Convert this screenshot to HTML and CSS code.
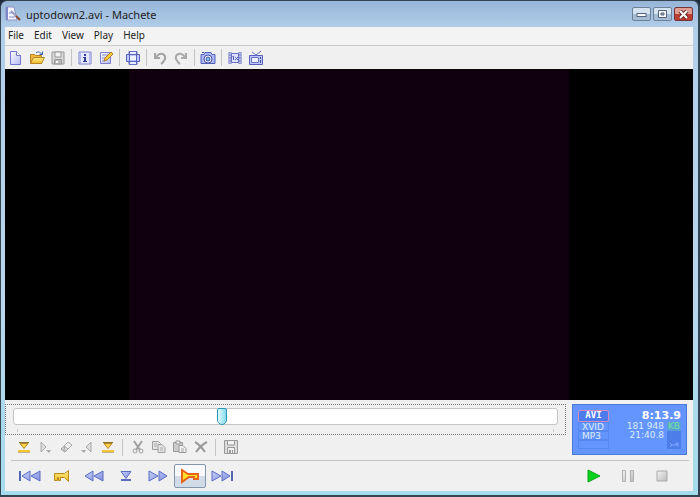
FILE: index.html
```html
<!DOCTYPE html>
<html lang="en">
<head>
  <meta charset="UTF-8">
  <title>uptodown2.avi - Machete</title>
  <link rel="stylesheet" href="styles.css">
</head>
<body>
  <!-- shared gradients -->
  <svg class="defs" aria-hidden="true">
    <defs>
      <linearGradient id="paper" x1="0" y1="0" x2="1" y2="1"><stop offset="0" stop-color="#fff"/><stop offset="1" stop-color="#b4baf2"/></linearGradient>
      <linearGradient id="blue" x1="0" y1="0" x2="1" y2="1"><stop offset="0" stop-color="#c3cdf8"/><stop offset="1" stop-color="#8492e2"/></linearGradient>
      <linearGradient id="gold" x1="0" y1="0" x2="0" y2="1"><stop offset="0" stop-color="#fff08a"/><stop offset="1" stop-color="#eeb820"/></linearGradient>
      <linearGradient id="grey" x1="0" y1="0" x2="1" y2="1"><stop offset="0" stop-color="#f2f2f2"/><stop offset="1" stop-color="#bcbcbc"/></linearGradient>
    </defs>
  </svg>

  <div class="window">
    <header class="titlebar">
      <svg class="app-icon" width="16" height="16" viewBox="0 0 16 16">
        <path d="M1 1h8l3 13H1z" fill="#f4f5fe" stroke="#8a92c4"/>
        <path d="M1 1h2v13H1z" fill="#8088cc"/>
        <path d="M4 7h5M4 11h6" stroke="#8088cc" fill="none"/>
        <path d="M6 5l6 6" stroke="#9aa0c0" stroke-width="2"/>
        <path d="M11 10l4 4" stroke="#8d4b32" stroke-width="2"/>
      </svg>
      <h1>uptodown2.avi - Machete</h1>
      <div class="window-buttons">
        <button aria-label="Minimize"><svg width="11" height="9" viewBox="0 0 11 9"><rect x="1" y="3.500" width="9" height="3" fill="#fff" stroke="#53657d"/></svg></button>
        <button aria-label="Maximize"><svg width="11" height="9" viewBox="0 0 11 9"><path d="M1.500.5h8v7h-8z" fill="#fff" stroke="#53657d"/><path d="M4 3h3v2H4z" fill="#9eb5cf" stroke="#53657d"/></svg></button>
        <button class="close" aria-label="Close"><svg width="11" height="9" viewBox="0 0 11 9"><path d="M2 1l7 7M9 1L2 8" stroke="#6b2a2a" stroke-width="4"/><path d="M2 1l7 7M9 1L2 8" stroke="#fff" stroke-width="2"/></svg></button>
      </div>
    </header>

    <nav class="menu">
      <button>File</button>
      <button>Edit</button>
      <button>View</button>
      <button>Play</button>
      <button>Help</button>
    </nav>

    <div class="toolbar">
      <button aria-label="New"><svg width="16" height="16" viewBox="0 0 16 16"><path d="M2.500 1.500h6l4 4v9h-10z" fill="url(#paper)" stroke="#7478cc"/><path d="M8.500 1.500v4h4" fill="#fff" stroke="#7478cc"/></svg></button>
      <button aria-label="Open"><svg width="16" height="16" viewBox="0 0 16 16"><path d="M1.500 13.500v-9h4l1 1h6v8z" fill="#efb73c" stroke="#b98428"/><path d="M1.500 13.500l3-6h11l-3 6z" fill="url(#gold)" stroke="#b98428"/><path d="M7 3c2-2 5-1 6 2M10.500 4.500h3v-3" fill="none" stroke="#355fb0"/></svg></button>
      <button aria-label="Save" disabled><svg width="16" height="16" viewBox="0 0 16 16"><path d="M2 2h12v12H2z" fill="#d8d8d8" stroke="#999"/><path d="M5 2h6v5H5z" fill="#f2f2f2" stroke="#999"/><path d="M4.500 9.500h7V14h-7z" fill="#b9b9b9" stroke="#999"/><path d="M6 11h2v2H6z" fill="#fff"/></svg></button>
      <span class="sep"></span>
      <button aria-label="File information"><svg width="16" height="16" viewBox="0 0 16 16"><path d="M2 2h12v12H2z" fill="#e6e9ff" stroke="#7c82cc"/><path d="M3.500 3v10M12.500 3v10" stroke="#b3bbf1"/><path d="M7 4h2v2H7zM6 7h3v4h1v1H6v-1h1V8H6z" fill="#303ca0"/></svg></button>
      <button aria-label="Edit tags"><svg width="16" height="16" viewBox="0 0 16 16"><path d="M2.500 2.500h10v11h-10z" fill="url(#paper)" stroke="#7a80cc"/><path d="M4 5h6M4 8h4M4 11h3" stroke="#8a92d4"/><path d="M6 11l1-3 6-6 2 2-6 6z" fill="#ffcf35" stroke="#b87823"/></svg></button>
      <span class="sep"></span>
      <button aria-label="Video frame"><svg width="16" height="16" viewBox="0 0 16 16"><path d="M4 1.500h8v13H4z" fill="#e8ecff" stroke="#6871c8"/><path d="M1.500 4.500h13v7h-13z" fill="#bcc6ff" stroke="#5962bd"/><path d="M4.500 2v12M11.500 2v12" stroke="#5962bd"/><path d="M5 6h6v4H5z" fill="#eef1ff"/></svg></button>
      <span class="sep"></span>
      <button aria-label="Undo" disabled><svg width="16" height="16" viewBox="0 0 16 16"><path d="M3 3v5h5M3 8l3-3c4-3 8 0 7 4-1 2-2 4-4 5" fill="none" stroke="#a4a4a4" stroke-width="2"/></svg></button>
      <button aria-label="Redo" disabled><svg width="16" height="16" viewBox="0 0 16 16"><path d="M13 3v5H8M13 8l-3-3C6 2 2 5 3 9c1 2 2 4 4 5" fill="none" stroke="#aaa" stroke-width="2"/></svg></button>
      <span class="sep"></span>
      <button aria-label="Capture frame"><svg width="16" height="16" viewBox="0 0 16 16"><path d="M1 4.500h3l1-2h6l1 2h3v9H1z" fill="#aeb8f5" stroke="#5560b8"/><circle cx="8" cy="9" r="4" fill="#fff" stroke="#4350b1"/><circle cx="8" cy="9" r="2" fill="#7fc0f4" stroke="#4350b1"/><path d="M2 2.500h2" stroke="#4350b1"/></svg></button>
      <span class="sep"></span>
      <button aria-label="Original size"><svg width="16" height="16" viewBox="0 0 16 16"><path d="M3 2v12M13 2v12" stroke="#6e75c8" stroke-width="3"/><path d="M3 2.500v11M13 2.500v11" stroke="#fff" stroke-dasharray="2 1"/><path d="M4.500 3.500h7v9h-7z" fill="#dbe1ff" stroke="#6870c4"/><path d="M5.500 7l1-1v4M8 7l3 3M11 7l-3 3" fill="none" stroke="#5660b9"/></svg></button>
      <button aria-label="Full screen"><svg width="16" height="16" viewBox="0 0 16 16"><path d="M4 2l4 3 5-4" fill="none" stroke="#6871c2"/><path d="M1.500 5.500h13v9h-13z" fill="#bec6fb" stroke="#5861b9"/><path d="M3.500 7.500h7v5h-7z" fill="#eef2ff" stroke="#6972c7"/><path d="M12.500 7v2M12.500 10v3" stroke="#414ba8"/></svg></button>
    </div>

    <main class="video"><div class="frame"></div></main>

    <footer class="controls">
      <div class="upper">
        <div class="editing">
          <div class="seek">
            <input type="range" min="0" max="1300" value="494" aria-label="Position">
            <div class="ticks"></div>
          </div>
          <div class="toolbar edit-bar">
            <button aria-label="Selection start"><svg width="14" height="14" viewBox="0 0 14 14"><path d="M2 2.500h10M1 12h12" stroke="#91702a"/><path d="M3 3.500h8l-4 5z" fill="#ffd34a" stroke="#b88625"/><path d="M1 11h12" stroke="#f3c530" stroke-width="2"/></svg></button>
            <button aria-label="Go to selection start" disabled><svg width="14" height="14" viewBox="0 0 14 14"><path d="M3 2l5 5-5 5z" fill="#ddd" stroke="#aaa"/><path d="M8 10h5l-2 3z" fill="#aaa"/></svg></button>
            <button aria-label="Clear selection" disabled><svg width="14" height="14" viewBox="0 0 14 14"><path d="M2 9l7-7 4 3-7 7z" fill="#eee" stroke="#a5a5a5"/><path d="M5 6l4 3M2 9l4 3v-3L5 6z" fill="#ccc" stroke="#a5a5a5"/></svg></button>
            <button aria-label="Go to selection end" disabled><svg width="14" height="14" viewBox="0 0 14 14"><path d="M11 2L6 7l5 5z" fill="#ddd" stroke="#aaa"/><path d="M1 10h5l-2 3z" fill="#aaa"/></svg></button>
            <button aria-label="Selection end"><svg width="14" height="14" viewBox="0 0 14 14"><path d="M2 2.500h10M1 12h12" stroke="#91702a"/><path d="M3 3.500h8l-4 5z" fill="#ffd34a" stroke="#b88625"/><path d="M1 11h12" stroke="#f3c530" stroke-width="2"/></svg></button>
            <span class="sep"></span>
            <button aria-label="Cut" disabled><svg width="14" height="14" viewBox="0 0 14 14"><path d="M3 1l6 9M11 1L5 10" stroke="#a0a0a0" stroke-width="2"/><circle cx="4" cy="11" r="2" fill="none" stroke="#a0a0a0"/><circle cx="10" cy="11" r="2" fill="none" stroke="#a0a0a0"/></svg></button>
            <button aria-label="Copy" disabled><svg width="14" height="14" viewBox="0 0 14 14"><path d="M.5 1.500h6l2 2v6h-8z" fill="#e4e4e4" stroke="#a0a0a0"/><path d="M6 4.500h4l3 3v5H6z" fill="#e4e4e4" stroke="#a0a0a0"/><path d="M2 4h3M2 6h3M8 8h3M8 10h3" stroke="#aaa"/></svg></button>
            <button aria-label="Paste" disabled><svg width="14" height="14" viewBox="0 0 14 14"><path d="M.5 2.500h9v9h-9z" fill="#ccc" stroke="#999"/><path d="M3 1h4v3H3z" fill="#eee" stroke="#999"/><path d="M6 5.500h4l3 3v4H6z" fill="#eee" stroke="#999"/><path d="M8 9h3M8 11h3" stroke="#aaa"/></svg></button>
            <button aria-label="Delete" disabled><svg width="14" height="14" viewBox="0 0 14 14"><path d="M1 2c4 2 7 6 10 10M13 2C9 4 5 8 2 12" fill="none" stroke="#999" stroke-width="2"/></svg></button>
            <span class="sep"></span>
            <button aria-label="Save selection" disabled><svg width="14" height="14" viewBox="0 0 14 14"><path d="M.5.5h13v13H.5z" fill="#ddd" stroke="#999"/><path d="M3.500 1v4h7V1M3.500 13V7.500h7V13" fill="#f1f1f1" stroke="#999"/><path d="M5 10h2v3H5zM8 10h1v3H8z" fill="#999"/></svg></button>
          </div>
        </div>

        <section class="info">
          <div class="formats">
            <b>AVI</b>
            <span>XVID</span>
            <span>MP3</span>
            <span></span>
          </div>
          <div class="stats">
            <strong>8:13.9</strong>
            <span>181 948</span><em>KB</em>
            <span>21:40.8</span><i></i>
            <span></span><i><svg width="10" height="8" viewBox="0 0 10 8"><path d="M1 2l2 2-2 2M3 4h6v2M7 4V2h2v2" fill="none" stroke="#7ea6ff"/></svg></i>
          </div>
        </section>
      </div>

      <div class="playback">
        <button aria-label="Go to start"><svg width="24" height="14" viewBox="0 0 24 14"><path d="M2 2v10" stroke="#5366b4" stroke-width="2"/><path d="M4 7l8-5v10zM13 7l9-5v10z" fill="url(#blue)" stroke="#5c6dc0"/></svg></button>
        <button aria-label="Previous key frame"><svg width="18" height="14" viewBox="0 0 18 14"><path d="M15.500 1.500v11l-4-4h-4v3h-2v-3h-1v3h-3v-7h10z" fill="url(#gold)" stroke="#b88c1c"/></svg></button>
        <button aria-label="Step back"><svg width="22" height="14" viewBox="0 0 22 14"><path d="M2 7l8-5v10zM11 7l9-5v10z" fill="url(#blue)" stroke="#5c6dc0"/></svg></button>
        <button aria-label="Go to position"><svg width="14" height="14" viewBox="0 0 14 14"><path d="M2 2.500h10l-5 7z" fill="url(#blue)" stroke="#5c6dc0"/><path d="M2 11h10" stroke="#5c6dc0" stroke-width="2"/></svg></button>
        <button aria-label="Step forward"><svg width="22" height="14" viewBox="0 0 22 14"><path d="M2 2l9 5-9 5zM12 2l8 5-8 5z" fill="url(#blue)" stroke="#5c6dc0"/></svg></button>
        <button class="active" aria-label="Next key frame"><svg width="20" height="16" viewBox="0 0 20 16"><path d="M2 2l6 4h10v5h-4V9H9l-7 5z" fill="#ffe428" stroke="#e8641c" stroke-width="2"/></svg></button>
        <button aria-label="Go to end"><svg width="24" height="14" viewBox="0 0 24 14"><path d="M2 2l9 5-9 5zM12 2l8 5-8 5z" fill="url(#blue)" stroke="#5c6dc0"/><path d="M22 2v10" stroke="#5366b4" stroke-width="2"/></svg></button>
        <div class="transport">
          <button aria-label="Play"><svg width="16" height="16" viewBox="0 0 16 16"><path d="M2 2l12 6-12 6z" fill="#08d21b" stroke="#08a516"/></svg></button>
          <button aria-label="Pause" disabled><svg width="16" height="16" viewBox="0 0 16 16"><path d="M2.500 2.500h3v11h-3zM10.500 2.500h3v11h-3z" fill="url(#grey)" stroke="#b0b0b0"/></svg></button>
          <button aria-label="Stop" disabled><svg width="16" height="16" viewBox="0 0 16 16"><path d="M3 3h10v10H3z" fill="url(#grey)" stroke="#a8a8a8"/></svg></button>
        </div>
      </div>
    </footer>
  </div>
</body>
</html>
```
FILE: styles.css
```css
* {
  box-sizing: border-box;
}

body {
  margin: 0;
  background: #1c2c38;
  font-family: "Noto Sans", sans-serif;
  font-size: 10px;
  color: #222;
}

button {
  padding: 0;
  border: 0;
  background: none;
  font: inherit;
  color: inherit;
}

svg {
  display: block;
}

.defs {
  position: absolute;
  width: 0;
  height: 0;
}

.window {
  display: flex;
  flex-direction: column;
  height: 100vh;
  padding: 0 5px 4px 4px;
  border: 1px solid #344450;
  border-width: 1px 2px 2px 1px;
  border-radius: 7px 7px 0 0;
  background: linear-gradient(#97b5d8, #b2cfea 28px, #b9d6ee 60%, #a4dcec);
}

.titlebar {
  display: flex;
  align-items: center;
  height: 26px;
}

.titlebar h1 {
  flex: 1;
  margin: 0 0 0 5px;
  font-size: 11px;
  font-weight: normal;
}

.window-buttons {
  display: flex;
  gap: 2px;
}

.window-buttons button {
  display: flex;
  align-items: center;
  justify-content: center;
  width: 19px;
  height: 14px;
  border: 1px solid #6e8197;
  border-radius: 2px;
  background: linear-gradient(#d5e2ef 50%, #a5bcd5 50%);
}

.window-buttons .close {
  border-color: #73343a;
  background: linear-gradient(#df9c91 50%, #bd3b30 50%);
}

.menu {
  display: flex;
  gap: 10px;
  height: 18px;
  padding: 0 3px;
  background: #f4f3f4;
}

.menu button {
  padding-bottom: 3px;
}

.toolbar {
  display: flex;
  align-items: center;
  height: 24px;
  border-top: 1px solid #ccc;
  background: #f1f0f1;
}

.toolbar button {
  display: flex;
  align-items: center;
  justify-content: center;
  width: 21px;
  height: 20px;
}

.sep {
  width: 6px;
  height: 17px;
  background: linear-gradient(#c4c4c4, #c4c4c4) center / 1px 100% no-repeat;
}

.video {
  display: flex;
  justify-content: center;
  flex: 1;
  background: #000;
}

.frame {
  width: 64%;
  background: #10000d;
}

.controls {
  padding: 4px 0 0;
  background: #f1f0f1;
}

.upper {
  display: flex;
  gap: 6px;
  padding-right: 6px;
}

.editing {
  flex: 1;
}

.seek {
  height: 31px;
  padding: 3px 7px;
  border: 1px dotted #777;
}

.seek input {
  display: block;
  width: 100%;
  height: 17px;
  margin: 0;
  border: 1px solid #c5c5c5;
  border-radius: 3px;
  background: #fff;
  appearance: none;
}

.seek input::-webkit-slider-thumb {
  width: 10px;
  height: 17px;
  background: linear-gradient(90deg, #e3fbff, #83d9ec);
  border: 1px solid #2898b6;
  border-radius: 2px 2px 5px 5px;
  appearance: none;
}

.ticks {
  height: 3px;
  margin: 4px 4px 0;
  border: 1px solid #ccc;
  border-width: 0 1px;
}

.edit-bar {
  padding-left: 8px;
  border: 0;
}

.edit-bar .sep {
  width: 9px;
}

.info {
  display: flex;
  justify-content: space-between;
  width: 115px;
  height: 51px;
  padding: 5px;
  border: 1px solid #4c78d8;
  background: #6495fe;
  font-family: "DejaVu Sans", sans-serif;
  font-size: 9px;
  line-height: 9px;
  color: #dcebff;
}

.formats {
  display: grid;
  grid-template-rows: 12px 9px 9px 9px;
  width: 31px;
}

.formats b {
  border: 1px solid #d48bc2;
  border-radius: 2px;
  background: #4c7cec;
  font-family: "DejaVu Sans Mono", monospace;
  text-align: center;
  color: #fff;
}

.formats span {
  padding-left: 3px;
  border: 1px solid #5788ef;
  line-height: 8px;
}

.stats {
  display: grid;
  grid-template-columns: 1fr 14px;
  grid-template-rows: 12px 9px 9px 9px;
  column-gap: 3px;
  text-align: right;
}

.stats strong {
  grid-column: 1 / 3;
  font-size: 11px;
  line-height: 11px;
  color: #fff;
}

.stats em {
  background: #5a9fda;
  font-style: normal;
  text-align: center;
  color: #74e29b;
}

.stats i {
  display: grid;
  place-items: center;
  background: #4c7de9;
}

.playback {
  display: flex;
  align-items: center;
  height: 31px;
  margin: 1px 4px 0 6px;
  padding-left: 3px;
  border-top: 1px solid #c4c4c4;
}

.playback button {
  display: flex;
  align-items: center;
  justify-content: center;
  width: 32px;
  height: 24px;
}

.playback .active {
  border: 1px solid #8297ad;
  border-radius: 2px;
  background: linear-gradient(#f7f9fc 50%, #d2dce8 50%);
}

.transport {
  display: flex;
  gap: 2px;
  margin-left: auto;
  padding-right: 11px;
}
```
